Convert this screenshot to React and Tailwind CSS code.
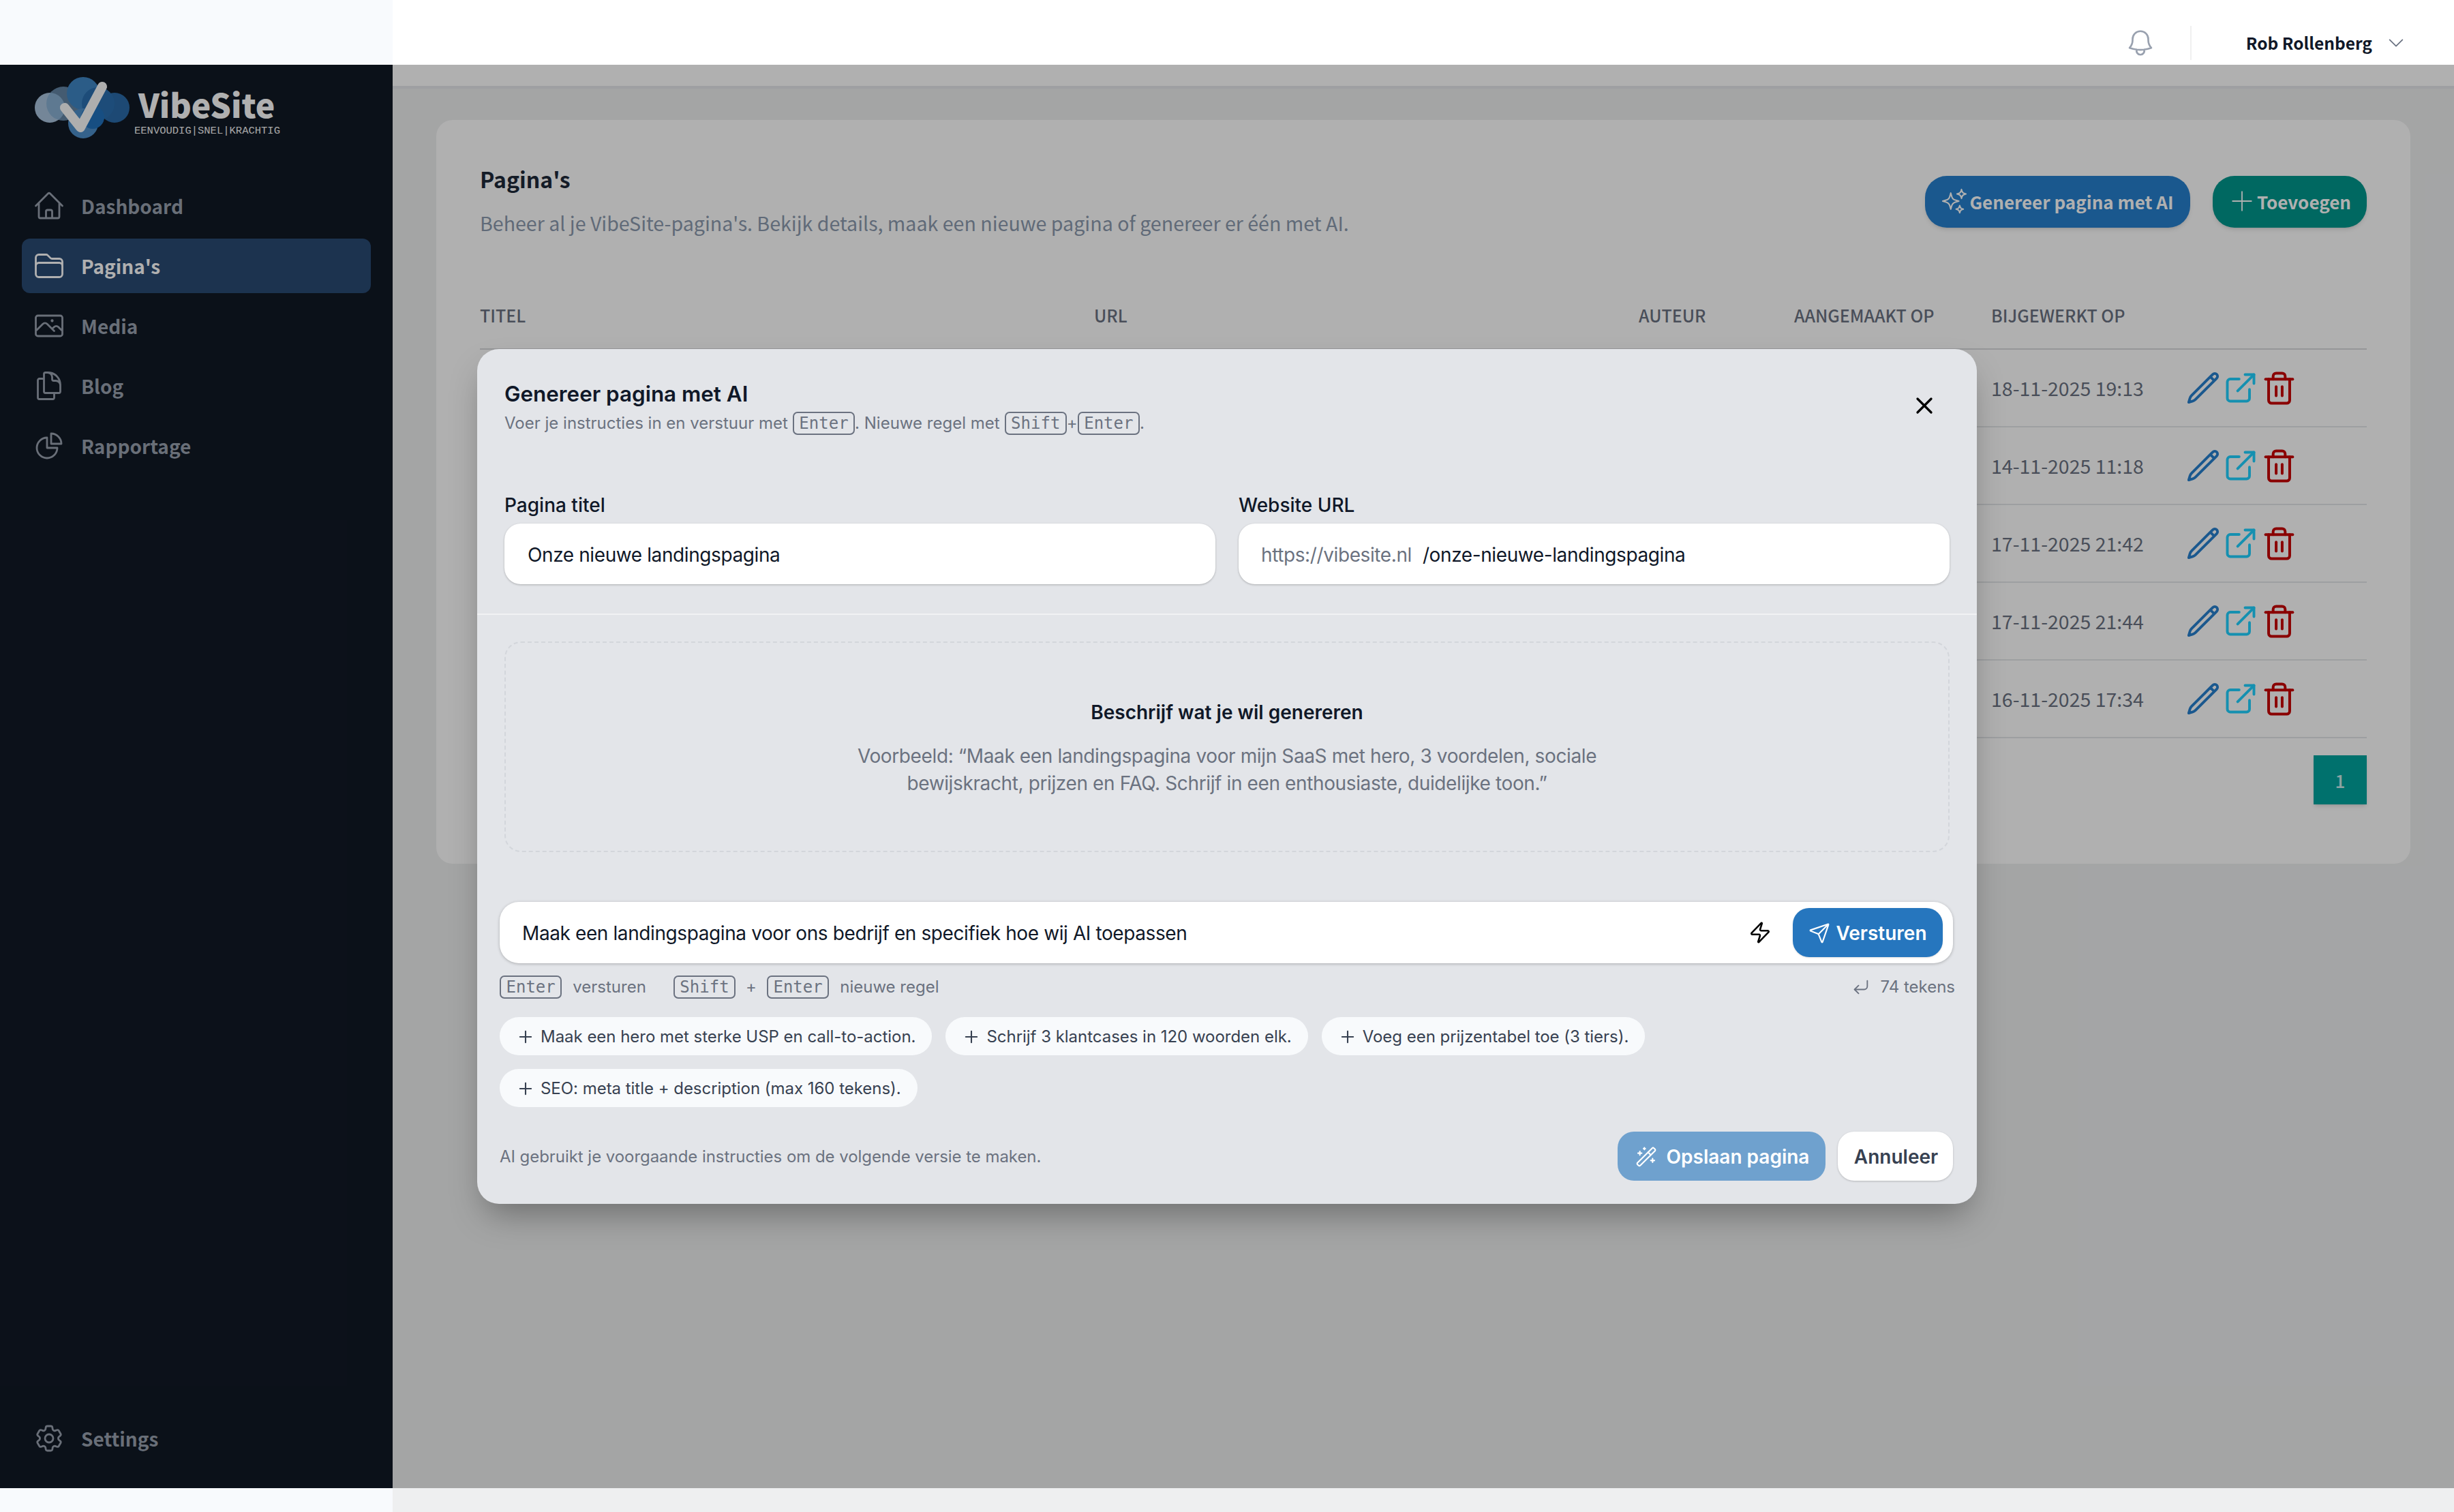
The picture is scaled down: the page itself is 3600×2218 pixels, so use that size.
import React from 'react';
import {
    HiOutlineHome, HiOutlineFolder, HiOutlinePhoto, HiOutlineDocumentDuplicate, HiOutlineChartPie,
    HiOutlineCog6Tooth, HiOutlineBell, HiOutlineChevronDown, HiOutlineSparkles, HiOutlinePlus, HiOutlinePencil,
} from 'react-icons/hi2';
import {ExternalLink, Trash2, X, Zap, Send, CornerDownLeft, Plus, WandSparkles} from 'lucide-react';

const navItems = [
    {label: 'Dashboard', icon: HiOutlineHome},
    {label: "Pagina's", icon: HiOutlineFolder, active: true},
    {label: 'Media', icon: HiOutlinePhoto},
    {label: 'Blog', icon: HiOutlineDocumentDuplicate},
    {label: 'Rapportage', icon: HiOutlineChartPie},
];

const dates = ['18-11-2025 19:13', '14-11-2025 11:18', '17-11-2025 21:42', '17-11-2025 21:44', '16-11-2025 17:34'];

const chips = [
    'Maak een hero met sterke USP en call-to-action.',
    'Schrijf 3 klantcases in 120 woorden elk.',
    'Voeg een prijzentabel toe (3 tiers).',
    'SEO: meta title + description (max 160 tekens).',
];

const Logo = () => (
    <svg width="144" height="96" viewBox="0 0 144 96" className="shrink-0">
        <circle cx="25" cy="48" r="22" fill="#a9c3dc"/>
        <circle cx="45" cy="42" r="25" fill="#7fa9cf" fillOpacity="0.75"/>
        <circle cx="120" cy="48" r="22" fill="#2a6ba8"/>
        <circle cx="74" cy="27" r="24" fill="#3f86c4"/>
        <circle cx="96" cy="42" r="24" fill="#2a6fb0"/>
        <circle cx="74" cy="71" r="22" fill="#4d8fca"/>
        <circle cx="88" cy="62" r="17" fill="#2272bd"/>
        <path d="M47 48 L70 77 L102 17" fill="none" stroke="#fdfdfd" strokeWidth="14" strokeLinecap="round" strokeLinejoin="round"/>
    </svg>
);

const Kbd = ({children}) => (
    <span className="inline-flex h-[34px] items-center rounded-[7px] border-2 border-[#6b7280] px-[7.5px] font-['DejaVu_Sans_Mono',monospace] text-[24px] leading-none tracking-normal text-[#6b7280]">
        {children}
    </span>
);

function Sidebar() {
    return (
        <aside className="flex w-[576px] shrink-0 flex-col bg-[#f8fafd] pt-[95px] pb-[35px]">
            <div className="flex flex-1 flex-col bg-[#111925] px-[32px] font-['Noto_Sans_CJK_SC',sans-serif]">
                <div className="ml-[16px] flex h-[167px] items-start pt-[15px]">
                    <Logo/>
                    <div className="ml-[5px] mt-[13px] flex flex-col">
                        <span className="pl-[6px] text-[48px] leading-[58px] font-black text-white">VibeSite</span>
                        <span className="mt-[2px] font-['Liberation_Mono',monospace] text-[15.5px] leading-[18px] text-[#f2f2f2]">EENVOUDIG|SNEL|KRACHTIG</span>
                    </div>
                </div>
                <nav className="flex flex-col gap-[8px]">
                    {navItems.map(({label, icon: Icon, active}) => (
                        <div key={label}
                             className={`flex h-[80px] items-center gap-[23px] rounded-[12px] pl-[16px] text-[28px] font-semibold ${active ? 'bg-[#294a73] text-white' : 'text-gray-400'}`}>
                            <Icon className="size-[48px] shrink-0 stroke-[1.4]"/>
                            <span>{label}</span>
                        </div>
                    ))}
                </nav>
                <div className="mt-auto mb-[33px] flex h-[80px] items-center gap-[23px] pl-[16px] text-[28px] font-semibold text-gray-400">
                    <HiOutlineCog6Tooth className="size-[48px] shrink-0 stroke-[1.4]"/>
                    <span>Settings</span>
                </div>
            </div>
        </aside>
    );
}

function Topbar() {
    return (
        <header className="flex h-[130px] shrink-0 justify-end border-b-[4px] border-[#e5e7eb] bg-white pr-[70px] pt-[38px] font-['Noto_Sans_CJK_SC',sans-serif]">
            <div className="flex h-[50px] items-center">
                <HiOutlineBell className="size-[46px] stroke-[1.4] text-gray-400"/>
                <div className="ml-[50px] h-[50px] w-[2px] bg-[#f0f0f0]"/>
                <span className="ml-[80px] text-[24.5px] font-semibold text-gray-900">Rob Rollenberg</span>
                <HiOutlineChevronDown className="ml-[20px] size-[30px] stroke-[1.4] text-gray-500"/>
            </div>
        </header>
    );
}

function PagesCard() {
    return (
        <section className="rounded-[24px] bg-white px-[64px] pt-[64px] pb-[87px] font-['Noto_Sans_CJK_SC',sans-serif]">
            <div className="flex justify-between">
                <div>
                    <h1 className="text-[32px] leading-[44px] font-semibold text-gray-800">Pagina's</h1>
                    <p className="mt-[21px] text-[28.6px] leading-[44px] text-[#8b9aae]">Beheer al je VibeSite-pagina's. Bekijk details, maak een nieuwe pagina of genereer er één met AI.</p>
                </div>
                <div className="mt-[18px] flex h-[76px] gap-[33px] text-[26px] font-semibold text-white">
                    <button className="flex w-[389px] items-center justify-center gap-[1px] rounded-[32px] bg-[#2780ce] pr-[2px] pb-[2px] shadow-md">
                        <HiOutlineSparkles className="size-[42px] stroke-[1.2]"/>
                        Genereer pagina met AI
                    </button>
                    <button className="flex w-[226px] items-center justify-center gap-[0px] rounded-[32px] bg-[#00978d] pr-[2px] pb-[2px] shadow-md">
                        <HiOutlinePlus className="size-[44px] stroke-[1]"/>
                        Toevoegen
                    </button>
                </div>
            </div>
            <div className="mt-[64px] grid h-[100px] grid-cols-[901px_799px_228px_289px_288px_263px] items-center border-b-2 border-[#d8dadd] pt-[2px] text-[25px] font-medium text-gray-500">
                <span>TITEL</span>
                <span>URL</span>
                <span>AUTEUR</span>
                <span>AANGEMAAKT OP</span>
                <span>BIJGEWERKT OP</span>
                <span/>
            </div>
            {dates.map(date => (
                <div key={date} className="grid h-[114px] grid-cols-[2217px_288px_263px] items-center border-b-2 border-[#e4e6e9] text-[28.5px] text-gray-500">
                    <span/>
                    <span>{date}</span>
                    <div className="flex items-center">
                        <HiOutlinePencil className="-ml-[3px] size-[52px] stroke-[1.8] text-[#2780ce]"/>
                        <ExternalLink className="ml-[3px] size-[52px] stroke-[1.8] text-[#1fd1ff]"/>
                        <Trash2 className="ml-[4px] size-[53px] stroke-[1.8] text-[#c80000]"/>
                    </div>
                </div>
            ))}
            <div className="mt-[25px] flex justify-end">
                <div className="flex h-[72px] w-[78px] items-center justify-center bg-[#00a49e] text-[26px] font-medium text-white/80 shadow-md">1</div>
            </div>
        </section>
    );
}

function GenerateModal() {
    return (
        <div className="w-[2200px] rounded-[32px] bg-[#e3e5e9] font-['Inter',sans-serif] shadow-[0_25px_50px_-12px_rgba(0,0,0,0.35)]">
            <div className="flex items-center justify-between px-[40px] pt-[46px]">
                <div>
                    <h2 className="text-[31.4px] leading-[40px] font-semibold text-gray-900">Genereer pagina met AI</h2>
                    <p className="mt-[7px] flex h-[32px] items-center gap-[7px] text-[24px] text-[#6b7280]">
                        Voer je instructies in en verstuur met <Kbd>Enter</Kbd>
                        <span className="-ml-[7px]">. Nieuwe regel met</span> <Kbd>Shift</Kbd>
                        <span className="-mx-[7px]">+</span> <Kbd>Enter</Kbd>
                        <span className="-ml-[7px]">.</span>
                    </p>
                </div>
                <X className="mr-[17px] mt-[-6px] size-[40px] stroke-[2] text-black"/>
            </div>

            <div className="mt-[86px] grid grid-cols-2 gap-[34px] px-[40px] tracking-[-0.4px]">
                <div>
                    <div className="text-[28px] leading-[36px] font-medium tracking-normal text-gray-900">Pagina titel</div>
                    <div className="mt-[9px] flex h-[89px] items-center rounded-[24px] bg-white pl-[34px] pt-[2px] text-[28px] text-gray-900 shadow-[0_1px_3px_rgba(0,0,0,0.25)]">Onze nieuwe landingspagina</div>
                </div>
                <div>
                    <div className="text-[28px] leading-[36px] font-medium tracking-normal text-gray-900">Website URL</div>
                    <div className="mt-[9px] flex h-[89px] items-center gap-[16px] rounded-[24px] bg-white pl-[33px] pt-[2px] text-[28px] text-gray-900 shadow-[0_1px_3px_rgba(0,0,0,0.25)]">
                        <span className="text-[#6b7280]">https://vibesite.nl</span>
                        <span>/onze-nieuwe-landingspagina</span>
                    </div>
                </div>
            </div>
            <div className="mt-[43px] h-[2px] bg-[#f1f2f4]"/>

            <div className="mx-[40px] mt-[39px] flex h-[309px] flex-col items-center rounded-[24px] border-2 border-dashed border-[#d3d6db] pt-[82px] text-center">
                <div className="text-[28px] leading-[40px] font-semibold text-gray-900">Beschrijf wat je wil genereren</div>
                <p className="mt-[24px] text-[28px] leading-[40px] tracking-[-0.38px] text-[#6b7280]">
                    Voorbeeld: “Maak een landingspagina voor mijn SaaS met hero, 3 voordelen, sociale<br/>
                    bewijskracht, prijzen en FAQ. Schrijf in een enthousiaste, duidelijke toon.”
                </p>
            </div>

            <div className="mt-[73px] pr-[35px] pl-[33px] pb-[34px]">
                <div className="flex h-[90px] items-center rounded-[28px] bg-white pr-[15px] pl-[33px] pt-[1px] shadow-[0_1px_4px_rgba(0,0,0,0.25)]">
                    <span className="flex-1 pt-[1px] text-[28px] tracking-[-0.4px] text-gray-900">Maak een landingspagina voor ons bedrijf en specifiek hoe wij AI toepassen</span>
                    <Zap className="-mt-[1px] size-[34px] stroke-[1.8] text-black"/>
                    <button className="-mt-[1px] ml-[31px] flex h-[72px] w-[220px] items-center justify-center gap-[8px] rounded-[24px] bg-[#2676be] pt-[1px] text-[28px] font-semibold text-white shadow-sm">
                        <Send className="size-[32px] stroke-[1.6]"/>
                        Versturen
                    </button>
                </div>

                <div className="mt-[17px] flex h-[36px] items-center justify-between text-[24px] text-[#6b7280]">
                    <div className="flex items-center">
                        <Kbd>Enter</Kbd>
                        <span className="ml-[16px]">versturen</span>
                        <span className="ml-[40px]"><Kbd>Shift</Kbd></span>
                        <span className="mx-[15px]">+</span>
                        <Kbd>Enter</Kbd>
                        <span className="ml-[16px]">nieuwe regel</span>
                    </div>
                    <div className="-mr-[3px] flex items-center gap-[14px]">
                        <CornerDownLeft className="size-[28px] stroke-[1.6]"/>
                        74 tekens
                    </div>
                </div>

                <div className="mt-[26px] flex flex-wrap gap-x-[20px] gap-y-[20px]">
                    {chips.map(chip => (
                        <div key={chip} className="flex h-[56px] items-center gap-[8px] rounded-full bg-[#f8fafc] pr-[24px] pl-[24px] pt-[1px] text-[24px] tracking-[-0.03px] text-[#374151]">
                            <Plus className="size-[28px] stroke-[1.8]"/>
                            {chip}
                        </div>
                    ))}
                </div>

                <div className="mt-[36px] flex h-[72px] items-center justify-between">
                    <span className="pt-[1px] text-[24px] tracking-[-0.05px] text-[#6b7280]">AI gebruikt je voorgaande instructies om de volgende versie te maken.</span>
                    <div className="flex gap-[18px]">
                        <button className="flex h-[72px] w-[305px] items-center justify-center gap-[14px] rounded-[24px] bg-[#6fa1ce] pl-[2px] pt-[1px] text-[28px] font-semibold text-white">
                            <WandSparkles className="size-[32px] stroke-[1.6]"/>
                            Opslaan pagina
                        </button>
                        <button className="h-[72px] w-[169px] rounded-[24px] bg-white pl-[2px] pt-[1px] text-[28px] font-semibold text-[#374151] shadow-[0_1px_3px_rgba(0,0,0,0.2)]">Annuleer</button>
                    </div>
                </div>
            </div>
        </div>
    );
}

function App() {
    return (
        <div className="relative flex h-[2218px] w-[3600px] overflow-hidden bg-[#eeeff0]">
            <Sidebar/>
            <div className="flex min-w-0 flex-1 flex-col">
                <Topbar/>
                <main className="px-[64px] pt-[46px]">
                    <PagesCard/>
                </main>
            </div>
            {/* overlay loopt niet over de volle hoogte, zo staat het ook in de screenshot */}
            <div className="absolute inset-x-0 top-[95px] bottom-[35px] flex items-center justify-center bg-black/[0.31]">
                <GenerateModal/>
            </div>
        </div>
    );
}

export default App;
